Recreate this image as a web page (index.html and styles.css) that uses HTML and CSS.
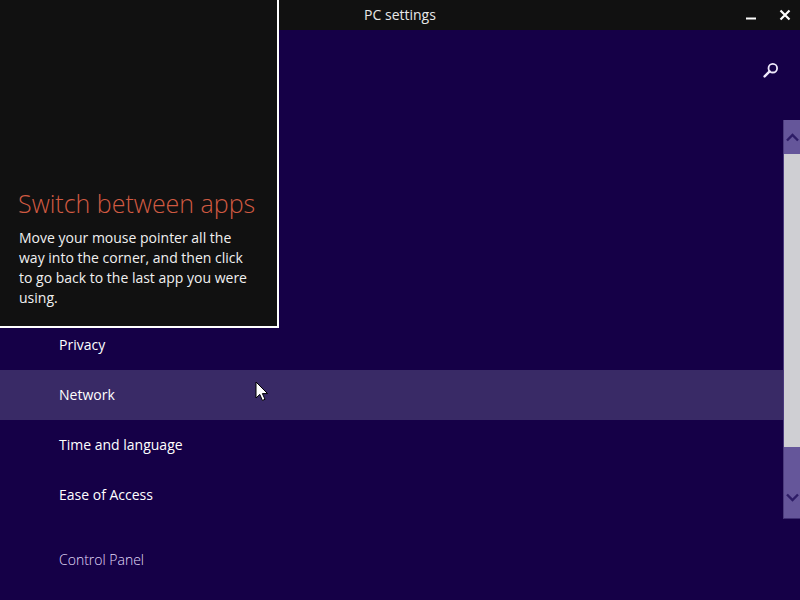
FILE: index.html
```html
<!DOCTYPE html>
<html lang="en">
<head>
<meta charset="utf-8">
<title>PC settings</title>
<link rel="stylesheet" href="styles.css">
</head>
<body>
<div class="window">
  <header class="titlebar">
    <span class="title">PC settings</span>
    <div class="controls">
      <svg class="ctl" width="12" height="12" viewBox="0 0 12 12"><path d="M1 9.5h10" stroke="#fff" stroke-width="2"/></svg>
      <svg class="ctl" width="12" height="12" viewBox="0 0 12 12"><path d="M1.5 1.5l9 9M10.5 1.5l-9 9" stroke="#fff" stroke-width="2.2"/></svg>
    </div>
  </header>
  <main class="main">
    <div class="content">
      <div class="top">
        <svg class="search" width="16" height="16" viewBox="0 0 16 16"><circle cx="9.8" cy="6.2" r="4.3" fill="none" stroke="#efe9fb" stroke-width="1.8"/><path d="M6.6 9.4L1.6 14.4" stroke="#efe9fb" stroke-width="2.4" stroke-linecap="round"/></svg>
      </div>
      <nav class="list">
        <a class="row">Privacy</a>
        <a class="row hover">Network</a>
        <a class="row">Time and language</a>
        <a class="row">Ease of Access</a>
        <a class="row link">Control Panel</a>
      </nav>
    </div>
    <aside class="scrollbar">
      <div class="arrow"><svg width="13" height="9" viewBox="0 0 13 9"><path d="M1 7.5l5.5-5.5 5.5 5.5" fill="none" stroke="#2d1c66" stroke-width="2.4"/></svg></div>
      <div class="thumb"></div>
      <div class="track"></div>
      <div class="arrow bottom"><svg width="13" height="9" viewBox="0 0 13 9"><path d="M1 1.5l5.5 5.5 5.5-5.5" fill="none" stroke="#2d1c66" stroke-width="2.4"/></svg></div>
    </aside>
  </main>
  <section class="tip">
    <h2 class="tip-title">Switch between apps</h2>
    <p class="tip-text">Move your mouse pointer all the way into the corner, and then click to go back to the last app you were using.</p>
  </section>
  <svg class="cursor" width="14" height="21" viewBox="0 0 14 21"><path d="M1 1v16l3.8-3.6 2.6 6 2.6-1.1-2.6-5.7h5.2z" fill="#fff" stroke="#000" stroke-width="1"/></svg>
</div>
</body>
</html>
```
FILE: styles.css
```css
* { box-sizing: border-box; }
html, body { margin: 0; height: 100%; }
body { font-family: "Open Sans", "Liberation Sans", sans-serif; color: #fff; background: #150047; overflow: hidden; }
.window { position: relative; width: 800px; height: 600px; display: flex; flex-direction: column; }
.titlebar { height: 30px; flex: none; background: #111; display: flex; align-items: center; justify-content: center; position: relative; padding-bottom: 1px; }
.title { font-size: 14px; color: #e8e8e8; }
.controls { position: absolute; top: 9px; right: 9px; display: flex; gap: 22px; }
.ctl { display: block; }
.main { flex: 1; display: flex; min-height: 0; }
.content { flex: 1; min-width: 0; display: flex; flex-direction: column; }
.top { height: 290px; display: flex; justify-content: flex-end; padding: 32px 4px 0 0; }
.search { display: block; }
.list { display: flex; flex-direction: column; }
.row { height: 50px; display: flex; align-items: center; padding: 0 0 2px 59px; font-size: 14px; color: #fff; }
.row.hover { background: #392a66; }
.row.link { margin-top: 15px; color: #e2dbfa; font-weight: 300; }
.scrollbar { flex: none; width: 17px; height: 399px; margin-top: 90px; background: #65569a; display: flex; flex-direction: column; border-left: 1px solid #4a3a7c; border-bottom: 1px solid #3e2e72; }
.arrow { height: 34px; flex: none; display: flex; align-items: center; justify-content: center; }
.arrow.bottom { height: 71px; align-items: flex-end; padding-bottom: 16px; }
.thumb { height: 293px; flex: none; background: #cfcfd3; }
.track { flex: 1; }
.tip { position: absolute; left: 0; top: 0; width: 279px; height: 328px; background: #111; border-right: 2px solid #fff; border-bottom: 2px solid #fff; padding: 185px 0 0 19px; }
.tip-title { margin: 0 0 0 -1px; font-size: 25px; font-weight: 300; line-height: 36px; color: #d05a42; white-space: nowrap; }
.tip-text { margin: 7px 0 0; width: 236px; font-size: 14px; line-height: 20px; color: #f0f0f0; }
.cursor { position: absolute; left: 255px; top: 381px; }
```
